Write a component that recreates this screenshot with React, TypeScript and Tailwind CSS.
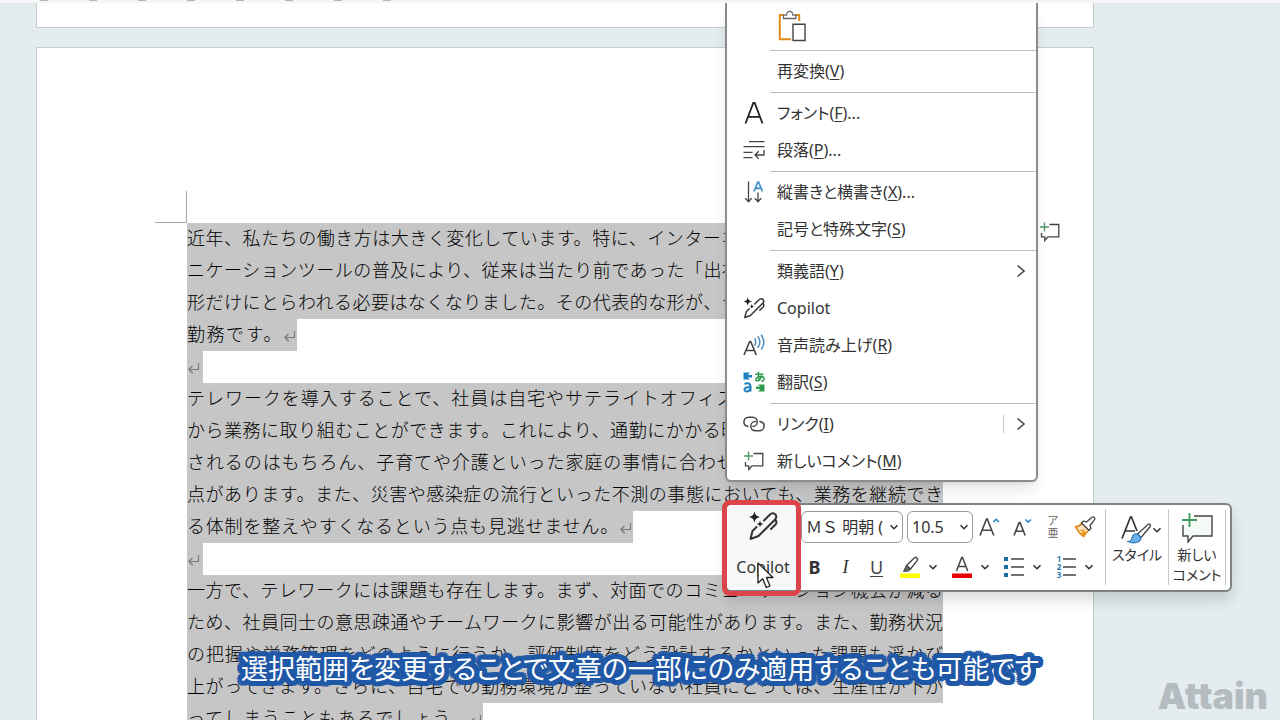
import React, { useState } from 'react';

type MenuEntry = {
    label?: string;
    accessKey?: string;
    tail?: string;
    icon?: React.ReactNode;
    submenu?: boolean;
    split?: boolean;
    separator?: boolean;
};

// selected document lines, end marks the last line of a paragraph
const lines: { text: string; end?: boolean; width: string }[] = [
    { text: '近年、私たちの働き方は大きく変化しています。特に、インターネット環境の整備やコミュ', width: 'w-[756px]' },
    { text: 'ニケーションツールの普及により、従来は当たり前であった「出社して働く」という従来の', width: 'w-[756px]' },
    { text: '形だけにとらわれる必要はなくなりました。その代表的な形が、テレワークと呼ばれる在宅', width: 'w-[756px]' },
    { text: '勤務です。', end: true, width: 'w-[110px]' },
    { text: '', end: true, width: 'w-4' },
    { text: 'テレワークを導入することで、社員は自宅やサテライトオフィス、カフェなど多様な場所', width: 'w-[756px]' },
    { text: 'から業務に取り組むことができます。これにより、通勤にかかる時間や体力的な負担が軽減', width: 'w-[756px]' },
    { text: 'されるのはもちろん、子育てや介護といった家庭の事情に合わせて柔軟に働けるという利', width: 'w-[756px]' },
    { text: '点があります。また、災害や感染症の流行といった不測の事態においても、業務を継続でき', width: 'w-[756px]' },
    { text: 'る体制を整えやすくなるという点も見逃せません。', end: true, width: 'w-[446px]' },
    { text: '', end: true, width: 'w-4' },
    { text: '一方で、テレワークには課題も存在します。まず、対面でのコミュニケーション機会が減る', width: 'w-[756px]' },
    { text: 'ため、社員同士の意思疎通やチームワークに影響が出る可能性があります。また、勤務状況', width: 'w-[756px]' },
    { text: 'の把握や労務管理をどのように行うか、評価制度をどう設計するかといった課題も浮かび', width: 'w-[756px]' },
    { text: '上がってきます。さらに、自宅での勤務環境が整っていない社員にとっては、生産性が下が', width: 'w-[756px]' },
    { text: 'ってしまうこともあるでしょう。', end: true, width: 'w-[296px]' },
];

function ReturnMark() {
    return (
        <svg viewBox="0 0 14 14" className="inline-block w-3.5 h-3.5 text-[#777]" fill="none" stroke="currentColor" strokeWidth="1.2">
            <path d="M11.5 2v6.5H2M5.5 5L2 8.5 5.5 12" />
        </svg>
    );
}

function Chevron({ className }: { className?: string }) {
    return (
        <svg viewBox="0 0 10 10" className={`w-2.5 h-2.5 shrink-0 ${className ?? ''}`} fill="none" stroke="#333" strokeWidth="1.6">
            <path d="M1.5 3.2L5 6.7l3.5-3.5" />
        </svg>
    );
}

function PasteIcon() {
    return (
        <svg viewBox="0 0 28 32" className="w-7 h-8" fill="none">
            <path d="M6 5H1.8v24.2H13M17 5h4.2v6" stroke="#e08a1e" strokeWidth="2" />
            <path d="M5.5 8.5V5.2h3C8.8 2.8 10 1.3 11.7 1.3s2.9 1.5 3.2 3.9h3v3.3z" stroke="#666" strokeWidth="1.3" fill="#fff" />
            <path d="M15 14.3h12v16.2H15z" stroke="#444" strokeWidth="1.4" fill="#fff" />
        </svg>
    );
}

function FontIcon() {
    return (
        <svg viewBox="0 0 22 22" className="w-[22px] h-[22px]" fill="none" stroke="#222" strokeWidth="1.8">
            <path d="M2.5 21.5L10.3 1h1.4l7.8 20.5M5.2 14.8h11.6" />
        </svg>
    );
}

function ParagraphIcon() {
    return (
        <svg viewBox="0 0 22 20" className="w-[22px] h-5" fill="none" stroke="#444" strokeWidth="1.3">
            <path d="M6 1.7h15.5M.5 6.7h21M.5 12.3h9M.5 17.7h9M21 10v5h-8.5M15.7 11.2L12 15l3.7 3.8" />
        </svg>
    );
}

function DirectionIcon() {
    return (
        <svg viewBox="0 0 22 22" className="w-[22px] h-[22px]" fill="none" strokeWidth="1.3">
            <path d="M5.5.5v20M2.3 17.3l3.2 3.4 3.2-3.4M15 11.5v9M11.8 17.3l3.2 3.4 3.2-3.4" stroke="#444" />
            <path d="M11 10.5L14.8 1h.8l3.8 9.5M12.4 7.3h5.6" stroke="#3a8fc4" strokeWidth="1.7" />
        </svg>
    );
}

function CopilotIcon({ className }: { className: string }) {
    return (
        <svg viewBox="0 0 30 30" className={className} fill="none">
            <path d="M6.500 0c.8 4.200 1.800 5.200 6 6-4.200.8-5.200 1.800-6 6-.8-4.200-1.800-5.200-6-6 4.200-.8 5.200-1.800 6-6z" fill="#222" />
            <path d="M12 9.500c.5 2.500 1 3 3.500 3.500-2.500.5-3 1-3.500 3.500-.5-2.500-1-3-3.500-3.500 2.500-.5 3-1 3.500-3.500z" fill="#222" />
            <path d="M16 9.500l5.500-5.500c1.800-1.800 4.200-2 5.700-.7 1.500 1.600 1.200 3.900-.6 5.700L10.500 25 2.500 28l2-8 4-4M27.500 9c1.300 1.700 1.300 3.200 0 4.500l-4.500 4.500" stroke="#333" strokeWidth="2" strokeLinejoin="round" strokeLinecap="round" />
        </svg>
    );
}

function ReadAloudIcon() {
    return (
        <svg viewBox="0 0 22 22" className="w-[22px] h-[22px]" fill="none">
            <path d="M1 21L6.700 7.500h1L13.300 21M3 16.500h8.400" stroke="#444" strokeWidth="1.6" />
            <path d="M11.500 4.500c1.500 2 1.500 4.800 0 7M14.800 2.500c2.500 3.400 2.500 7.800 0 11.200M18.200.8c3.300 4.600 3.300 10.200 0 14.800" stroke="#4a90c2" strokeWidth="1.5" />
        </svg>
    );
}

function TranslateIcon() {
    return (
        <svg viewBox="0 0 22 22" className="w-[22px] h-[22px]" fill="none">
            <path d="M.5 1.500v7h6.500L4.800 6.500H9V4H4.800l2-2.500z" fill="#1b7fc0" />
            <path d="M21.500 20.500v-7H15l2.200 2H13V18h4.200l-2 2.500z" fill="#2f9a4f" />
            <path d="M1.500 13c3-1.300 6-.6 6 2v5.500M7.500 16c-3.500 0-6 .5-6 2.600 0 2.400 4.500 2.600 6-.6" stroke="#1b7fc0" strokeWidth="2" />
            <path d="M12.300 3.200h8M15.500.8c-.3 4 0 6.500 1 8.700M18.800 4.500c-1 3.500-3.300 5.500-5 5.300-2-.3-1-4.300 4-4.300 4.500 0 4 4.300.5 5" stroke="#2f9a4f" strokeWidth="1.5" />
        </svg>
    );
}

function LinkIcon() {
    return (
        <svg viewBox="0 0 22 16" className="w-[22px] h-4" fill="none" stroke="#444" strokeWidth="1.5" strokeLinecap="round">
            <path d="M5 10.500C2.400 10 .9 8.200.9 6 .9 3.300 3 1.300 5.800 1.300h3.700c2.700 0 4.700 2 4.700 4.600 0 2.500-2 4.500-4.300 4.500" />
            <path d="M17 5.500c2.600.5 4.100 2.300 4.100 4.500 0 2.700-2.100 4.700-4.900 4.700h-3.700c-2.700 0-4.700-2-4.700-4.600 0-2.500 2-4.500 4.300-4.500" />
        </svg>
    );
}

function CommentIcon({ className }: { className: string }) {
    return (
        <svg viewBox="0 0 22 20" className={className} fill="none">
            <path d="M10.500 2.500h9.300v12.300H9L5.800 18.500v-3.700H2.500V11" stroke="#444" strokeWidth="1.300" />
            <path d="M5.500.5v9M1 5h9" stroke="#4f9a6a" strokeWidth="1.400" />
        </svg>
    );
}

const menu: MenuEntry[] = [
    { separator: true },
    { label: '再変換', accessKey: 'V' },
    { separator: true },
    { label: 'フォント', accessKey: 'F', tail: '...', icon: <FontIcon /> },
    { label: '段落', accessKey: 'P', tail: '...', icon: <ParagraphIcon /> },
    { separator: true },
    { label: '縦書きと横書き', accessKey: 'X', tail: '...', icon: <DirectionIcon /> },
    { label: '記号と特殊文字', accessKey: 'S' },
    { separator: true },
    { label: '類義語', accessKey: 'Y', submenu: true },
    { label: 'Copilot', icon: <CopilotIcon className="w-[22px] h-[22px]" /> },
    { label: '音声読み上げ', accessKey: 'R', icon: <ReadAloudIcon /> },
    { label: '翻訳', accessKey: 'S', icon: <TranslateIcon /> },
    { separator: true },
    { label: 'リンク', accessKey: 'I', icon: <LinkIcon />, submenu: true, split: true },
    { label: '新しいコメント', accessKey: 'M', icon: <CommentIcon className="w-[22px] h-5" /> },
];

function ContextMenu() {
    return (
        <div className="absolute left-[725px] top-[3px] w-[313px] bg-white border-2 border-t-0 border-[#8b8b8b] rounded-b-md shadow-lg">
            <div className="h-[45px] flex items-center pl-[51px]">
                <button aria-label="貼り付け"><PasteIcon /></button>
            </div>
            {menu.map((m, i) =>
                m.separator ? (
                    <div key={i} className="h-[5px] flex items-center pl-[43px]">
                        <div className="h-px flex-1 bg-[#bdbdbd]" />
                    </div>
                ) : (
                    <button key={i} className="w-full h-[37px] flex items-center gap-3 pl-4 pr-2.5 pb-0.5 text-left">
                        <span className="w-[22px] shrink-0 flex justify-center">{m.icon}</span>
                        <span className="flex-1">
                            {m.label}
                            {m.accessKey && <>(<u className="underline-offset-2">{m.accessKey}</u>)</>}
                            {m.tail}
                        </span>
                        {m.split && <span className="w-px h-[18px] bg-[#c8c8c8]" />}
                        {m.submenu && (
                            <svg viewBox="0 0 10 14" className="w-2.5 h-3.5" fill="none" stroke="#444" strokeWidth="1.6">
                                <path d="M1.500 1.500L8 7l-6.500 5.500" />
                            </svg>
                        )}
                    </button>
                )
            )}
        </div>
    );
}

function SplitButton({ label, children }: { label: string; children: React.ReactNode }) {
    return (
        <button aria-label={label} className="w-[52px] h-8 pl-2 flex items-center gap-2">
            {children}
            <Chevron />
        </button>
    );
}

function MiniToolbar() {
    const [font, setFont] = useState('ＭＳ 明朝 (');
    const [size, setSize] = useState('10.5');

    return (
        <div className="absolute left-[725px] top-[503px] flex bg-white border-2 border-[#7d8284] rounded-md pt-0.5 pb-[3px] pr-1 shadow-[0_8px_14px_rgba(0,0,0,0.14)]">
            <button className="w-[72px] flex flex-col items-center justify-between pt-1 pb-2 bg-[#f8f8f8]">
                <CopilotIcon className="w-[30px] h-[30px]" />
                <span>Copilot</span>
            </button>

            <div className="pr-1">
                <div className="h-10 flex items-center pl-0.5">
                    <div className="relative flex items-center">
                        <select aria-label="フォント" value={font} onChange={(e) => setFont(e.target.value)} className="appearance-none w-[102px] h-8 pl-1 border border-[#999] rounded-md bg-white [font-feature-settings:normal]">
                            <option>ＭＳ 明朝 (</option>
                        </select>
                        <Chevron className="absolute right-1 pointer-events-none" />
                    </div>
                    <div className="relative flex items-center ml-1">
                        <select aria-label="フォント サイズ" value={size} onChange={(e) => setSize(e.target.value)} className="appearance-none w-[66px] h-8 pl-1 border border-[#999] rounded-md bg-white">
                            <option>10.5</option>
                        </select>
                        <Chevron className="absolute right-1 pointer-events-none" />
                    </div>
                    <button aria-label="フォント サイズの拡大" className="w-8 h-8 flex items-center justify-center">
                        <svg viewBox="0 0 22 22" className="w-[22px] h-[22px]" fill="none">
                            <path d="M2 19.500L8.500 3h.8l6.500 16.500M4.300 14.300h9.300" stroke="#444" strokeWidth="1.6" />
                            <path d="M15.500 6l2.700-2.700L21 6" stroke="#2b88c8" strokeWidth="1.6" />
                        </svg>
                    </button>
                    <button aria-label="フォント サイズの縮小" className="w-8 h-8 flex items-center justify-center">
                        <svg viewBox="0 0 22 22" className="w-[22px] h-[22px]" fill="none">
                            <path d="M4 19.500L9.200 6.500h.8l5.200 13M5.800 15.300h7.600" stroke="#444" strokeWidth="1.6" />
                            <path d="M15.500 3.500l2.700 2.700L21 3.500" stroke="#2b88c8" strokeWidth="1.6" />
                        </svg>
                    </button>
                    <button aria-label="ルビ" className="w-8 h-8 flex flex-col items-center justify-center text-[11px] leading-3 text-[#666]">
                        <span>ア</span>
                        <span>亜</span>
                    </button>
                    <button aria-label="書式のコピー" className="w-8 h-8 flex items-center justify-center">
                        <svg viewBox="0 0 22 22" className="w-[22px] h-[22px]" fill="none" strokeLinejoin="round">
                            <path d="M1.500 10.500c3 .5 5-1.500 6.500-3.500l7 7c-2 2-4 4-5.500 6.500C6 18 3.500 15 1.500 10.500z" fill="#fbe3c0" stroke="#e0851c" strokeWidth="1.5" />
                            <path d="M4 14.500l7.500-1.200L6 18l3.500 2.500 4-4.500z" fill="#ee9420" />
                            <path d="M7.500 7l2-2 3 1 5.500-4.800c1.700-1 3.500.8 2.500 2.500L16 9.500l1 3-2 1.700z" fill="#fff" stroke="#444" strokeWidth="1.3" />
                        </svg>
                    </button>
                </div>

                <div className="h-10 flex items-center">
                    <button className="w-[31px] h-8 font-bold text-lg">B</button>
                    <button className="w-[31px] h-8 italic text-lg font-['Liberation_Serif',serif]">I</button>
                    <button className="w-[31px] h-8 text-lg underline underline-offset-2 decoration-1 text-[#444]">U</button>
                    <SplitButton label="蛍光ペンの色">
                        <svg viewBox="0 0 20 22" className="w-5 h-[22px]" fill="none">
                            <path d="M0 17.500h20V22H0z" fill="#ffff00" />
                            <path d="M6.500 9.500L14.500 1.800c1.500-1.300 4 .8 2.800 2.600L10.500 13z" stroke="#444" strokeWidth="1.4" />
                            <path d="M6.300 9.500l4.200 3.800-2 1.700-5 .5z" fill="#666" stroke="#444" />
                        </svg>
                    </SplitButton>
                    <SplitButton label="フォントの色">
                        <svg viewBox="0 0 20 22" className="w-5 h-[22px]" fill="none">
                            <path d="M0 17.500h20V22H0z" fill="#e60000" />
                            <path d="M4.500 15L9.700 1.500h.8L15.700 15M6.300 10.500h7.600" stroke="#444" strokeWidth="1.5" />
                        </svg>
                    </SplitButton>
                    <SplitButton label="箇条書き">
                        <svg viewBox="0 0 20 20" className="w-5 h-5" fill="none">
                            <path d="M0 0h4v4H0zM0 8h4v4H0zM0 16h4v4H0z" fill="#1a6f9c" />
                            <path d="M7 2h13M7 10h13M7 18h13" stroke="#444" strokeWidth="1.4" />
                        </svg>
                    </SplitButton>
                    <SplitButton label="段落番号">
                        <span className="flex w-5">
                            <span className="w-1.5 flex flex-col text-[8px] leading-[8px] font-bold text-[#2b78b0]">
                                <span>1</span>
                                <span>2</span>
                                <span>3</span>
                            </span>
                            <svg viewBox="0 0 14 24" className="w-3.5 h-6" fill="none">
                                <path d="M1 4h13M1 12h13M1 20h13" stroke="#444" strokeWidth="1.4" />
                            </svg>
                        </span>
                    </SplitButton>
                </div>
            </div>

            <div className="w-px my-0.5 bg-[#c8c8c8]" />
            <button className="w-[62px] flex flex-col items-center pt-2 text-sm leading-5">
                <span className="flex items-center pl-2">
                    <svg viewBox="0 0 32 30" className="w-8 h-[30px]" fill="none">
                        <path d="M2 23.500L10.500 2h1l5.500 14M5 16h10" stroke="#333" strokeWidth="1.7" />
                        <path d="M17.500 19L28 9.500c1.500-1.200 3.300.5 2.200 2L21 22.500z" fill="#fff" stroke="#444" strokeWidth="1.3" />
                        <path d="M17.500 19c-3-.5-5 1-5.500 4-.3 2-2 3.300-4 3.500 5 2.500 13 1.500 13-4z" fill="#6cb0e6" stroke="#2b78b8" strokeWidth="1.2" />
                    </svg>
                    <Chevron />
                </span>
                <span>スタイル</span>
            </button>
            <div className="w-px my-0.5 bg-[#c8c8c8]" />
            <button className="w-14 flex flex-col items-center pt-1 text-sm leading-5">
                <svg viewBox="0 0 32 32" className="w-8 h-8 shrink-0" fill="none">
                    <path d="M13 5h18v20H12l-5 6v-6H2V14" stroke="#444" strokeWidth="1.4" fill="#f5faf6" />
                    <path d="M8.500 2v14M1 9h15" stroke="#3f9a5f" strokeWidth="1.800" />
                </svg>
                <span className="mt-0.5">新しい</span>
                <span>コメント</span>
            </button>
            <div className="w-px my-0.5 bg-[#c8c8c8]" />

            {/* highlight frame around the Copilot button */}
            <div className="absolute -left-[5px] -top-[5px] w-[79px] h-24 border-[5px] border-[#dc4449] rounded-lg pointer-events-none" />
            <svg viewBox="0 0 18 28" className="absolute left-[30px] top-[57px] w-[18px] h-7" fill="#fff" stroke="#222" strokeWidth="1.3" strokeLinejoin="round">
                <path d="M1 1v20l4.700-4.200 3.600 8.700 3.700-1.600-3.600-8.400H16z" />
            </svg>
        </div>
    );
}

export default function App() {
    return (
        <div className="relative h-screen overflow-hidden bg-[#e4ecef] text-[#333] text-base font-['Noto_Sans','Noto_Sans_CJK_JP',sans-serif] [font-feature-settings:'palt']">
            {/* lower edge of the ribbon */}
            <div className="h-[3px] bg-[#f6f6f6] flex gap-[41px] pl-10">
                {Array.from({ length: 8 }, (_, i) => (
                    <span key={i} className="w-2 h-px bg-[#b5b5b5]" />
                ))}
            </div>

            {/* bottom of the previous page */}
            <div className="h-[25px] ml-9 mr-[186px] bg-white border border-t-0 border-[#c3cbce]" />

            <main className="mt-[19px] ml-9 mr-[186px] h-full bg-white border border-[#c3cbce] pt-[143px] pl-[150px]">
                <div className="-ml-8 w-8 h-8 border-r border-b border-[#a8a8a8]" />
                <div className="text-lg leading-7 text-black font-light font-['Noto_Sans_CJK_JP',sans-serif] [font-feature-settings:normal]">
                    {lines.map((line, i) => (
                        <p key={i} className={`${line.width} h-8 bg-[#c6c6c6] whitespace-nowrap [text-align-last:justify]`}>
                            {line.text}
                            {line.end && <ReturnMark />}
                        </p>
                    ))}
                </div>
            </main>

            <CommentIcon className="absolute left-[1039px] top-[222px] w-[22px] h-5" />
            <ContextMenu />
            <MiniToolbar />

            <p className="absolute inset-x-0 top-[648px] text-center text-[27px] leading-10 text-white font-['Noto_Sans_CJK_JP',sans-serif] [text-shadow:5px_0_#1f58a6,-5px_0_#1f58a6,0_5px_#1f58a6,0_-5px_#1f58a6,4px_4px_#1f58a6,-4px_4px_#1f58a6,4px_-4px_#1f58a6,-4px_-4px_#1f58a6,5px_2px_#1f58a6,-5px_2px_#1f58a6,5px_-2px_#1f58a6,-5px_-2px_#1f58a6,2px_5px_#1f58a6,-2px_5px_#1f58a6,2px_-5px_#1f58a6,-2px_-5px_#1f58a6,3px_0_#1f58a6,-3px_0_#1f58a6,0_3px_#1f58a6,0_-3px_#1f58a6,2px_2px_#1f58a6,-2px_-2px_#1f58a6,2px_-2px_#1f58a6,-2px_2px_#1f58a6]">
                選択範囲を変更することで文章の一部にのみ適用することも可能です
            </p>

            <div className="absolute right-3 bottom-1 text-4xl leading-10 font-black text-[#b4bcbf] font-['Inter',sans-serif]">Attain</div>
        </div>
    );
}
